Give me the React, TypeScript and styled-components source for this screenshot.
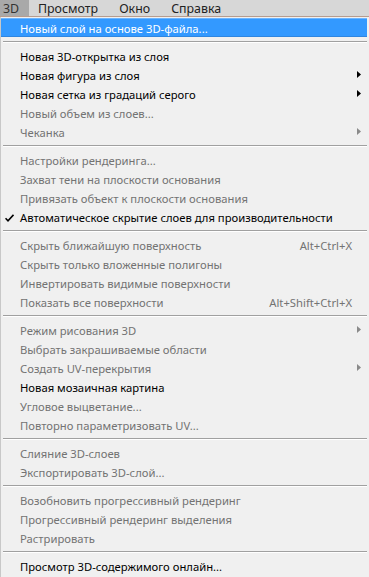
import React from "react";
import styled, { createGlobalStyle } from "styled-components";

const Global = createGlobalStyle`
  html, body { margin: 0; padding: 0; background: #f0f0f0; }
  body { font-family: "Noto Sans", "Open Sans", sans-serif; }
`;

const Page = styled.div`
  width: 369px;
  height: 577px;
  overflow: hidden;
  background: #f0f0f0;
  display: flex;
  flex-direction: column;
`;

const MenuBar = styled.div`
  height: 16px;
  background: #d7d7d7;
  border-bottom: 1px solid #b79c8e;
  display: flex;
  align-items: stretch;
  font-size: 12.4px;
  color: #111;
`;

const BarItem = styled.div<{ $active?: boolean }>`
  display: flex;
  align-items: center;
  box-sizing: border-box;
  padding: ${(p) => (p.$active ? "0 0 0 3px" : "0 10.5px")};
  background: ${(p) => (p.$active ? "#a9a9a9" : "transparent")};
  color: ${(p) => (p.$active ? "#333" : "#222")};
  width: ${(p) => (p.$active ? "29px" : "auto")};
  margin-right: ${(p) => (p.$active ? "-1.5px" : "0")};
`;

const Dropdown = styled.div`
  flex: 1;
  display: flex;
  flex-direction: column;
  padding-top: 1px;
  border-left: 1px solid #c8c8c8;
  font-size: 11.25px;
`;

const Item = styled.div<{ $disabled?: boolean; $hover?: boolean }>`
  height: 19px;
  box-sizing: border-box;
  display: flex;
  align-items: center;
  position: relative;
  padding-left: 19px;
  padding-right: 14px;
  padding-top: 1px;
  margin: 0 2px 0 0;
  color: ${(p) => (p.$hover ? "#fff" : p.$disabled ? "#737373" : "#000")};
  background: ${(p) => (p.$hover ? "#3399ff" : "transparent")};
  border-top: 1px solid ${(p) => (p.$hover ? "#6db5ff" : "transparent")};
  border-bottom: 1px solid ${(p) => (p.$hover ? "#2f86e0" : "transparent")};
  white-space: nowrap;
`;

const Label = styled.span`
  flex: 1;
`;

const Shortcut = styled.span`
  margin-right: 1px;
`;

const Check = styled.svg`
  position: absolute;
  left: 4px;
  top: 6px;
`;

const Arrow = styled.svg<{ $disabled?: boolean }>`
  position: absolute;
  right: 6px;
  top: 5px;
  fill: ${(p) => (p.$disabled ? "#8a8a8a" : "#000")};
`;

const Sep = styled.div`
  height: 9px;
  display: flex;
  flex-direction: column;
  justify-content: center;
  padding: 0 2px;
  &::before {
    content: "";
    display: block;
    height: 1px;
    background: #a0a0a0;
  }
  &::after {
    content: "";
    display: block;
    height: 1px;
    background: #ffffff;
  }
`;

type Entry =
  | { sep: true }
  | {
      sep?: false;
      label: string;
      disabled?: boolean;
      sub?: boolean;
      shortcut?: string;
      check?: boolean;
      hover?: boolean;
    };

const entries: Entry[] = [
  { label: "Новый слой на основе 3D-файла...", hover: true },
  { sep: true },
  { label: "Новая 3D-открытка из слоя" },
  { label: "Новая фигура из слоя", sub: true },
  { label: "Новая сетка из градаций серого", sub: true },
  { label: "Новый объем из слоев...", disabled: true },
  { label: "Чеканка", disabled: true, sub: true },
  { sep: true },
  { label: "Настройки рендеринга...", disabled: true },
  { label: "Захват тени на плоскости основания", disabled: true },
  { label: "Привязать объект к плоскости основания", disabled: true },
  { label: "Автоматическое скрытие слоев для производительности", check: true },
  { sep: true },
  { label: "Скрыть ближайшую поверхность", disabled: true, shortcut: "Alt+Ctrl+X" },
  { label: "Скрыть только вложенные полигоны", disabled: true },
  { label: "Инвертировать видимые поверхности", disabled: true },
  { label: "Показать все поверхности", disabled: true, shortcut: "Alt+Shift+Ctrl+X" },
  { sep: true },
  { label: "Режим рисования 3D", disabled: true, sub: true },
  { label: "Выбрать закрашиваемые области", disabled: true },
  { label: "Создать UV-перекрытия", disabled: true, sub: true },
  { label: "Новая мозаичная картина" },
  { label: "Угловое выцветание...", disabled: true },
  { label: "Повторно параметризовать UV...", disabled: true },
  { sep: true },
  { label: "Слияние 3D-слоев", disabled: true },
  { label: "Экспортировать 3D-слой...", disabled: true },
  { sep: true },
  { label: "Возобновить прогрессивный рендеринг", disabled: true },
  { label: "Прогрессивный рендеринг выделения", disabled: true },
  { label: "Растрировать", disabled: true },
  { sep: true },
  { label: "Просмотр 3D-содержимого онлайн..." },
];

export default function App() {
  return (
    <Page>
      <Global />
      <MenuBar>
        <BarItem $active>3D</BarItem>
        <BarItem>Просмотр</BarItem>
        <BarItem>Окно</BarItem>
        <BarItem>Справка</BarItem>
      </MenuBar>
      <Dropdown>
        {entries.map((e, i) =>
          e.sep ? (
            <Sep key={i} />
          ) : (
            <Item key={i} $disabled={e.disabled} $hover={e.hover}>
              {e.check && (
                <Check width="9" height="8" viewBox="0 0 9 8">
                  <path d="M0.5 4.2 L3 6.8 L8.5 0.8" stroke="#000" strokeWidth="1.6" fill="none" />
                </Check>
              )}
              <Label>{e.label}</Label>
              {e.shortcut && <Shortcut>{e.shortcut}</Shortcut>}
              {e.sub && (
                <Arrow $disabled={e.disabled} width="4" height="7" viewBox="0 0 4 7">
                  <path d="M0 0 L4 3.5 L0 7 Z" />
                </Arrow>
              )}
            </Item>
          )
        )}
      </Dropdown>
    </Page>
  );
}
